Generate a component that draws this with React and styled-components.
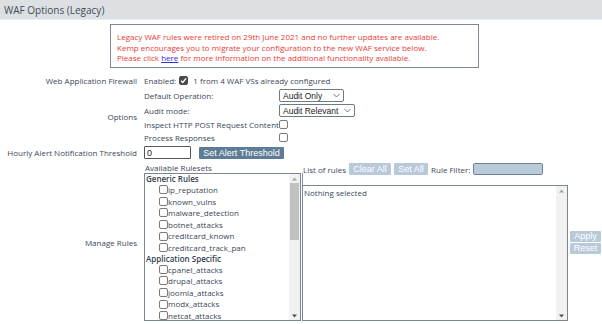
import React from 'react';
import styled, { createGlobalStyle } from 'styled-components';

const Global = createGlobalStyle`
  html, body { margin: 0; padding: 0; background: #fff; }
`;

const Page = styled.div`
  width: 602px;
  height: 324px;
  overflow: hidden;
  font-family: 'Open Sans', 'Noto Sans', sans-serif;
  font-size: 8px;
  color: #3a4856;
`;

const TitleBar = styled.div`
  height: 19px;
  display: flex;
  align-items: center;
  padding-left: 4px;
  background: #dde0e3;
  border-bottom: 1px solid #eceeef;
  font-size: 10px;
  color: #3d4a56;
`;

const Notice = styled.div`
  box-sizing: border-box;
  width: 369px;
  height: 44px;
  margin: 4px 0 0 110px;
  padding: 7px 6px;
  border: 1px solid #7f8a94;
  color: #ec3a34;
  line-height: 10.5px;

  a { color: #2b2bdc; text-decoration: underline; }
`;

const Form = styled.div`
  display: grid;
  grid-template-columns: 137px 1fr;
  column-gap: 7px;
  row-gap: 3px;
  margin-top: 6px;
`;

const Label = styled.div`
  text-align: right;
  align-self: center;
  white-space: nowrap;
`;

const Value = styled.div`
  display: flex;
  align-items: center;
  gap: ${p => p.$gap || 0}px;
  height: ${p => (p.$h ? `${p.$h}px` : 'auto')};
  white-space: nowrap;
`;

const OptionGrid = styled.div`
  display: grid;
  grid-template-columns: 135px auto;
  grid-template-rows: 13px 13px 11px 11px;
  row-gap: 2px;
  align-items: center;
  justify-items: start;
  white-space: nowrap;
`;

const Box = styled.span`
  box-sizing: border-box;
  display: inline-flex;
  align-items: center;
  justify-content: center;
  width: 9px;
  height: 9px;
  border-radius: 2px;
  border: 1px solid ${p => (p.$checked ? '#4a4a4a' : '#7b7b7b')};
  background: ${p => (p.$checked ? '#4a4a4a' : '#fff')};
  flex: none;
`;

const Select = styled.div`
  box-sizing: border-box;
  display: inline-flex;
  align-items: center;
  justify-content: space-between;
  gap: 3px;
  height: 13px;
  width: ${p => p.$w}px;
  padding: 0 3px 0 3px;
  border: 1px solid #6c7b8a;
  border-radius: 2px;
  font-family: 'Liberation Sans', Arial, sans-serif;
  font-size: 8.5px;
  white-space: nowrap;
  color: #222;
  background: #fff;
`;

const TextInput = styled.div`
  box-sizing: border-box;
  width: ${p => p.$w}px;
  height: ${p => p.$h}px;
  padding-left: 2px;
  display: flex;
  align-items: center;
  border: 1px solid ${p => (p.$tinted ? '#6f8396' : '#555')};
  border-radius: ${p => (p.$tinted ? 2 : 1)}px;
  background: ${p => (p.$tinted ? '#b8c9da' : '#fff')};
  font-family: 'Liberation Sans', Arial, sans-serif;
  font-size: 9px;
  color: #222;
`;

const Button = styled.span`
  display: inline-flex;
  align-items: center;
  justify-content: center;
  box-sizing: border-box;
  height: ${p => p.$h || 12}px;
  width: ${p => (p.$w ? `${p.$w}px` : 'auto')};
  padding: 0 4px;
  background: ${p => (p.$dark ? '#5e7c95' : '#b8c9da')};
  color: #fff;
  border-radius: 1px;
  font-family: 'Liberation Sans', Arial, sans-serif;
  font-size: 9px;
  white-space: nowrap;
`;

const Rules = styled.div`
  display: grid;
  grid-template-columns: 157px 1fr;
  column-gap: 1px;
  height: 160px;
`;

const LeftCol = styled.div`
  display: flex;
  flex-direction: column;
`;

const Caption = styled.div`
  height: 11px;
  line-height: 11px;
  padding-left: 1px;
`;

const ListBox = styled.div`
  box-sizing: border-box;
  display: flex;
  width: ${p => p.$w}px;
  height: ${p => p.$h}px;
  margin-left: ${p => p.$shift || 0}px;
  border: 1px solid #7a8691;
  background: #fff;
  overflow: hidden;
  flex: none;
`;

const ListBody = styled.div`
  flex: 1;
  overflow: hidden;
  padding: ${p => p.$top || 0}px 0 0 1px;
  line-height: 11.6px;
`;

const Group = styled.div`
  font-weight: 600;
  color: #33404c;
  height: 10px;
  line-height: 10px;
`;

const Item = styled.div`
  display: flex;
  align-items: center;
  padding-left: 13px;
  height: 11.6px;
`;

const Track = styled.div`
  width: 11px;
  flex: none;
  background: #f1f1f1;
  display: flex;
  flex-direction: column;
  align-items: center;
`;

const Arrow = styled.div`
  height: 9px;
  display: flex;
  align-items: center;
  justify-content: center;
  flex: none;
`;

const Thumb = styled.div`
  width: 9px;
  height: 57px;
  background: #c1c1c1;
`;

const Spacer = styled.div`
  flex: 1;
`;

const RightCol = styled.div`
  display: flex;
  flex-direction: column;
`;

const RulesHead = styled.div`
  height: 12px;
  margin-top: 1px;
  display: flex;
  align-items: center;
  gap: 3px;
  padding-left: 1px;
  white-space: nowrap;
`;

const RulesPane = styled.div`
  margin-top: -2px;
  padding-top: 12px;
  border-left: 1px solid #8a949e;
  display: flex;
  align-items: center;
  gap: 2px;
`;

const SideButtons = styled.div`
  display: flex;
  flex-direction: column;
  gap: 1px;
  margin-top: -22px;
`;

const Check = () => (
  <svg width="7" height="7" viewBox="0 0 8 8">
    <path d="M1.2 4.2 L3.2 6.2 L6.9 1.6" fill="none" stroke="#fff" strokeWidth="1.6" />
  </svg>
);

const Chevron = () => (
  <svg width="7" height="5" viewBox="0 0 7 5">
    <path d="M0.5 1 L3.5 4 L6.5 1" fill="none" stroke="#666" strokeWidth="0.9" />
  </svg>
);

const Up = () => (
  <svg width="5" height="4" viewBox="0 0 5 4">
    <path d="M0 3.5 L2.5 0.5 L5 3.5 Z" fill="#a3a3a3" />
  </svg>
);

const Down = () => (
  <svg width="5" height="4" viewBox="0 0 5 4">
    <path d="M0 0.5 L2.5 3.5 L5 0.5 Z" fill="#505050" />
  </svg>
);

const ruleGroups = [
  {
    name: 'Generic Rules',
    items: ['ip_reputation', 'known_vulns', 'malware_detection', 'botnet_attacks', 'creditcard_known', 'creditcard_track_pan'],
  },
  {
    name: 'Application Specific',
    items: ['cpanel_attacks', 'drupal_attacks', 'joomla_attacks', 'modx_attacks', 'netcat_attacks'],
  },
];

export default function App() {
  return (
    <Page>
      <Global />
      <TitleBar>WAF Options (Legacy)</TitleBar>
      <Notice>
        Legacy WAF rules were retired on 29th June 2021 and no further updates are available.
        <br />
        Kemp encourages you to migrate your configuration to the new WAF service below.
        <br />
        Please click <a>here</a> for more information on the additional functionality available.
      </Notice>

      <Form>
        <Label>Web Application Firewall</Label>
        <Value $h={12} $gap={3}>
          Enabled:
          <Box $checked><Check /></Box>
          <span>&nbsp;1 from 4 WAF VSs already configured</span>
        </Value>

        <Label>Options</Label>
        <OptionGrid>
          <span>Default Operation:</span>
          <Select $w={65}>Audit Only<Chevron /></Select>
          <span>Audit mode:</span>
          <Select $w={76}>Audit Relevant<Chevron /></Select>
          <span>Inspect HTTP POST Request Content</span>
          <Box />
          <span>Process Responses</span>
          <Box />
        </OptionGrid>

        <Label>Hourly Alert Notification Threshold</Label>
        <Value $h={13} $gap={8}>
          <TextInput $w={47} $h={13}>0</TextInput>
          <Button $dark $h={12} $w={85}>Set Alert Threshold</Button>
        </Value>

        <Label>Manage Rules</Label>
        <Rules>
          <LeftCol>
            <Caption>Available Rulesets</Caption>
            <ListBox $w={157} $h={148}>
              <ListBody>
                {ruleGroups.map(g => (
                  <div key={g.name}>
                    <Group>{g.name}</Group>
                    {g.items.map(i => (
                      <Item key={i}>
                        <Box />
                        {i}
                      </Item>
                    ))}
                  </div>
                ))}
              </ListBody>
              <Track>
                <Arrow><Up /></Arrow>
                <Thumb />
                <Spacer />
                <Arrow><Down /></Arrow>
              </Track>
            </ListBox>
          </LeftCol>

          <RightCol>
            <RulesHead>
              List of rules
              <Button $w={42}>Clear All</Button>
              <Button $w={34}>Set All</Button>
              Rule Filter:
              <TextInput $tinted $w={70} $h={12} />
            </RulesHead>
            <RulesPane>
              <ListBox $w={266} $h={136} $shift={-1}>
                <ListBody $top={1}>Nothing selected</ListBody>
                <Track>
                  <Arrow><Up /></Arrow>
                  <Spacer />
                  <Arrow><Down /></Arrow>
                </Track>
              </ListBox>
              <SideButtons>
                <Button $w={31} $h={11}>Apply</Button>
                <Button $w={31} $h={11}>Reset</Button>
              </SideButtons>
            </RulesPane>
          </RightCol>
        </Rules>
      </Form>
    </Page>
  );
}
